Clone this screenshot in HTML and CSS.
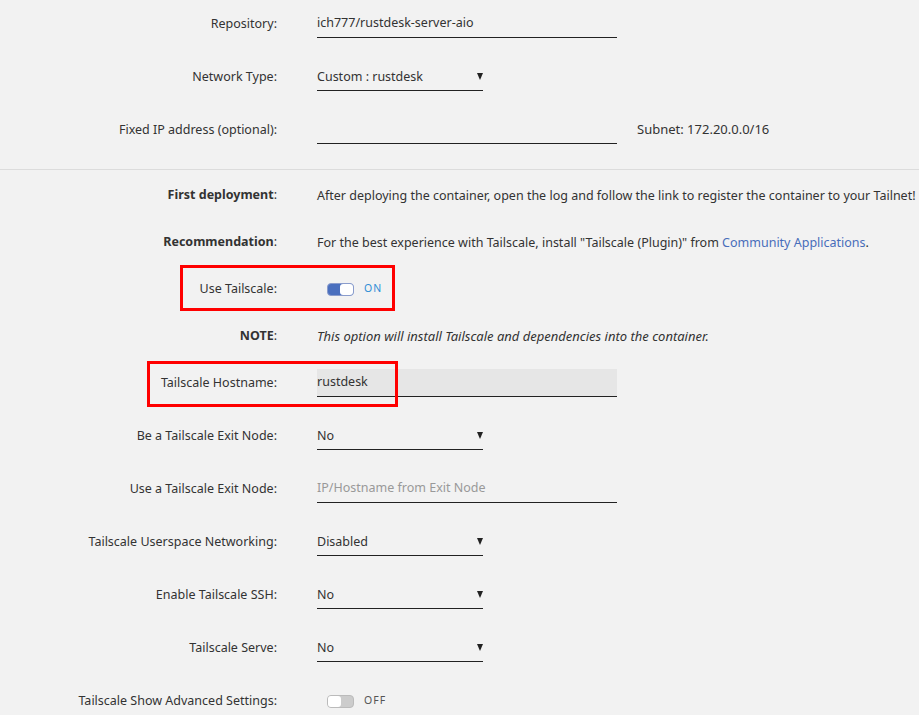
FILE: index.html
```html
<!DOCTYPE html>
<html lang="en">
  <head>
    <meta charset="UTF-8" />
    <title>Update Container</title>
    <link rel="stylesheet" href="styles.css">
  </head>
  <body>
    <!-- Basic container settings -->
    <div class="section">
      <div class="row">
        <div class="label">Repository:</div>
        <div class="field">
          <div class="input">ich777/rustdesk-server-aio</div>
        </div>
      </div>
      <div class="row">
        <div class="label">Network Type:</div>
        <div class="field">
          <div class="select"><span>Custom : rustdesk</span><span class="arrow"></span></div>
        </div>
      </div>
      <div class="row">
        <div class="label">Fixed IP address (optional):</div>
        <div class="field">
          <div class="input"></div>
          <span class="hint">Subnet: 172.20.0.0/16</span>
        </div>
      </div>
    </div>

    <!-- Tailscale settings -->
    <div class="section divided">
      <div class="row short">
        <div class="label"><b>First deployment</b>:</div>
        <div class="field">After deploying the container, open the log and follow the link to register the container to your Tailnet!</div>
      </div>
      <div class="row short">
        <div class="label"><b>Recommendation</b>:</div>
        <div class="field">
          <span>For the best experience with Tailscale, install "Tailscale (Plugin)" from <a href="#">Community Applications</a>.</span>
        </div>
      </div>
      <div class="row short">
        <div class="label">Use Tailscale:</div>
        <div class="field">
          <span class="switch on"><span class="knob"></span></span>
          <span class="state on">ON</span>
        </div>
        <div class="mark mark-use"></div>
      </div>
      <div class="row short">
        <div class="label"><b>NOTE</b>:</div>
        <div class="field"><i class="note">This option will install Tailscale and dependencies into the container.</i></div>
      </div>
      <div class="row">
        <div class="label">Tailscale Hostname:</div>
        <div class="field">
          <div class="input filled">rustdesk</div>
        </div>
        <div class="mark mark-host"></div>
      </div>
      <div class="row">
        <div class="label">Be a Tailscale Exit Node:</div>
        <div class="field">
          <div class="select"><span>No</span><span class="arrow"></span></div>
        </div>
      </div>
      <div class="row">
        <div class="label">Use a Tailscale Exit Node:</div>
        <div class="field">
          <div class="input placeholder">IP/Hostname from Exit Node</div>
        </div>
      </div>
      <div class="row">
        <div class="label">Tailscale Userspace Networking:</div>
        <div class="field">
          <div class="select"><span>Disabled</span><span class="arrow"></span></div>
        </div>
      </div>
      <div class="row">
        <div class="label">Enable Tailscale SSH:</div>
        <div class="field">
          <div class="select"><span>No</span><span class="arrow"></span></div>
        </div>
      </div>
      <div class="row">
        <div class="label">Tailscale Serve:</div>
        <div class="field">
          <div class="select"><span>No</span><span class="arrow"></span></div>
        </div>
      </div>
      <div class="row">
        <div class="label">Tailscale Show Advanced Settings:</div>
        <div class="field">
          <span class="switch"><span class="knob"></span></span>
          <span class="state">OFF</span>
        </div>
      </div>
    </div>
  </body>
</html>
```
FILE: styles.css
```css
/* General styles */
html,
body {
  margin: 0;
  padding: 0;
  background-color: #f2f2f2;
  color: #333;
  font-family: "Noto Sans", "Open Sans", sans-serif;
  font-size: 12.5px;
  overflow: hidden;
}
a {
  color: #486dba;
  text-decoration: none;
}

/* Form rows */
.section {
  padding-top: 10px;
}
.section.divided {
  border-top: 1px solid #dcdcdc;
  padding-top: 11px;
}
.row {
  position: relative;
  display: grid;
  grid-template-columns: 277px 1fr;
  column-gap: 40px;
  align-items: center;
  height: 28px;
  margin-bottom: 25px;
}
.row.short {
  margin-bottom: 19px;
}
.label {
  text-align: right;
  white-space: nowrap;
  padding-bottom: 2px;
}
.field {
  display: flex;
  align-items: center;
  gap: 20px;
  white-space: nowrap;
}
.note {
  font-size: 13px;
}

/* Inputs */
.input,
.select {
  box-sizing: border-box;
  height: 28px;
  line-height: 26px;
  border-bottom: 1px solid #222;
}
.input {
  width: 300px;
}
.input.filled {
  background-color: #e6e6e6;
}
.input.placeholder {
  color: #999;
}
.select {
  width: 166px;
  display: flex;
  justify-content: space-between;
  align-items: center;
}
.select .arrow {
  width: 0;
  height: 0;
  margin-right: 0;
  border-left: 3px solid transparent;
  border-right: 3px solid transparent;
  border-top: 7px solid #222;
}
.hint {
  color: #333;
  font-size: 13px;
  padding-bottom: 2px;
}

/* Switches */
.switch {
  box-sizing: border-box;
  position: relative;
  display: inline-block;
  width: 27px;
  height: 13px;
  margin-left: 10px;
  border: 1px solid #bbb;
  border-radius: 4px;
  background-color: #ccc;
}
.switch .knob {
  position: absolute;
  top: 0;
  left: 0;
  width: 13px;
  height: 11px;
  border-radius: 3px;
  background-color: #fff;
}
.switch.on {
  background-color: #4a6fbe;
  border-color: #8a9ccc;
}
.switch.on .knob {
  left: auto;
  right: 0;
}
.state {
  margin-left: -10px;
  font-size: 10.5px;
  letter-spacing: 1px;
  color: #555;
  padding-bottom: 2px;
}
.state.on {
  color: #2f8fd6;
}

/* Red annotation boxes */
.mark {
  position: absolute;
  border: 3px solid #f00;
  box-sizing: border-box;
  pointer-events: none;
}
.mark-use {
  left: 180px;
  top: -10px;
  width: 215px;
  height: 46px;
}
.mark-host {
  left: 147px;
  top: -8px;
  width: 251px;
  height: 46px;
}
```
